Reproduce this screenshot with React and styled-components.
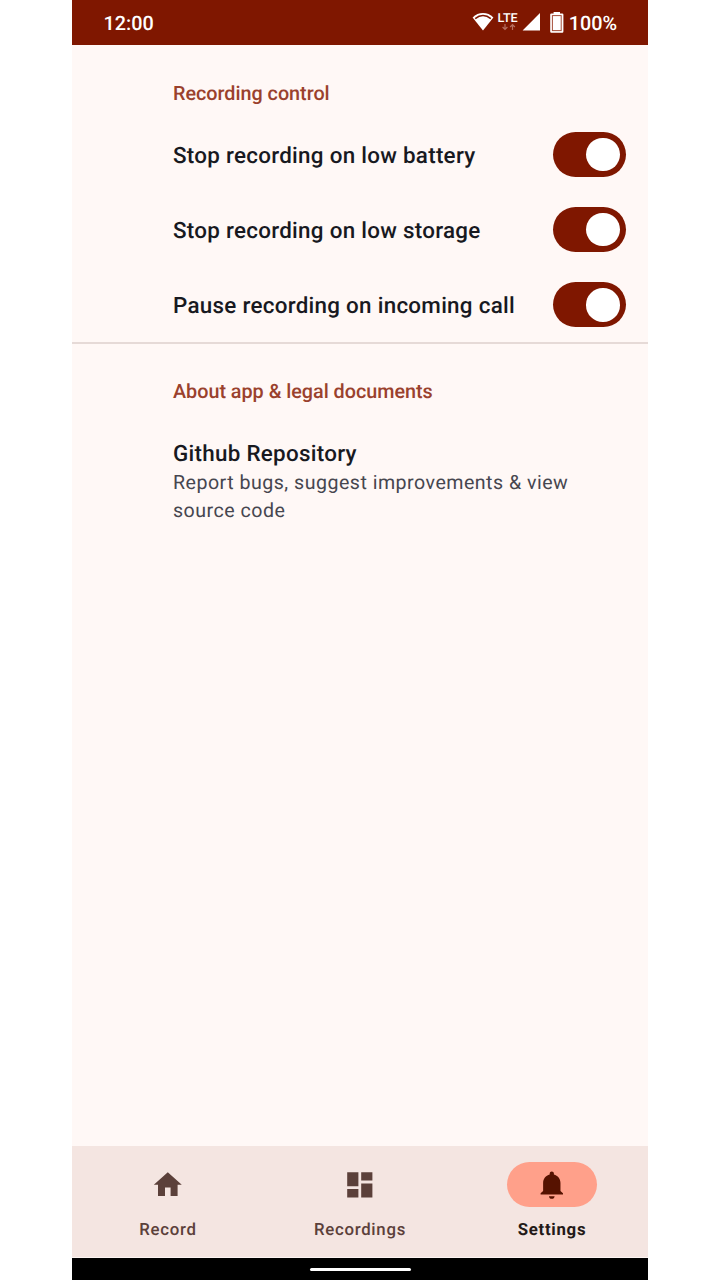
import React from 'react';
import styled, { createGlobalStyle } from 'styled-components';

const GlobalStyle = createGlobalStyle`
  * { box-sizing: border-box; }
  body { margin: 0; background: #ffffff; font-family: Roboto, "Liberation Sans", sans-serif; text-rendering: geometricPrecision; }
`;

const Phone = styled.div`
  width: 576px;
  height: 1280px;
  margin: 0 auto;
  display: flex;
  flex-direction: column;
  background: #fff8f6;
`;

const StatusBar = styled.header`
  height: 44.6px;
  flex: none;
  display: flex;
  align-items: center;
  padding: 3px 31px 0 31.5px;
  background: #7f1700;
  color: #ffffff;
  font-size: 19.8px;
  font-weight: 500;
  line-height: 25px;
`;

const StatusIcons = styled.div`
  margin-left: auto;
  display: flex;
  align-items: center;
`;

const StatusGlyphs = styled.svg`
  display: block;
  width: 96px;
  height: 24px;
  margin-top: -3px;
`;

const BatteryLevel = styled.span`
  width: 49px;
  text-align: right;
`;

const Content = styled.main`
  flex: 1;
  display: flex;
  flex-direction: column;
`;

const SectionTitle = styled.h2`
  margin: ${(p) => p.$top}px 0 0;
  padding-left: 101px;
  color: #9a412d;
  font-size: 19.75px;
  font-weight: 500;
  line-height: 28px;
  letter-spacing: 0;
`;

const ControlList = styled.div`
  padding-top: 9.2px;
`;

const Row = styled.div`
  height: 75.2px;
  display: flex;
  align-items: center;
  justify-content: space-between;
  padding: 0 22.4px 0 101px;
`;

const ItemTitle = styled.div`
  padding-top: ${(p) => p.$shift || 0}px;
  color: #18191f;
  font-size: 22.4px;
  font-weight: 500;
  line-height: 30px;
  letter-spacing: 0.28px;
`;

const Switch = styled.div`
  width: 72.8px;
  height: 44.8px;
  flex: none;
  display: flex;
  align-items: center;
  justify-content: flex-end;
  padding-right: 5.6px;
  border-radius: 23px;
  background: #7f1700;
`;

const Thumb = styled.div`
  width: 33.6px;
  height: 33.6px;
  border-radius: 50%;
  background: #ffffff;
`;

const Divider = styled.div`
  height: 2px;
  flex: none;
  background: #e6dad7;
`;

const LinkItem = styled.div`
  margin-top: 33px;
  padding: 0 60px 0 101px;
`;

const ItemSummary = styled.div`
  color: #46464f;
  font-size: 19.6px;
  line-height: 28px;
  letter-spacing: 0.49px;
`;

const NavBar = styled.nav`
  height: 112px;
  flex: none;
  display: grid;
  grid-template-columns: repeat(3, 1fr);
  background: #f4e5e1;
  border-bottom: 1px solid #fdf5f2;
`;

const NavItem = styled.div`
  display: flex;
  flex-direction: column;
  align-items: center;
  padding-top: 16.6px;
  color: ${(p) => (p.$active ? '#231917' : '#5b403a')};
  font-size: 16.8px;
  font-weight: ${(p) => (p.$active ? 700 : 500)};
  line-height: 22px;
  letter-spacing: 0.72px;
`;

const NavPill = styled.div`
  width: 89.6px;
  height: 44.8px;
  margin-bottom: 12px;
  display: flex;
  align-items: center;
  justify-content: center;
  border-radius: 23px;
  background: ${(p) => (p.$active ? '#ffa08a' : 'transparent')};
  color: ${(p) => (p.$active ? '#561200' : '#5b403a')};
`;

const NavIcon = styled.svg`
  width: 33.6px;
  height: 33.6px;
  fill: currentColor;
`;

const GestureBar = styled.footer`
  height: 22.4px;
  flex: none;
  display: flex;
  justify-content: center;
  align-items: center;
  padding-top: 1px;
  background: #000000;
`;

const GestureHandle = styled.div`
  width: 101px;
  height: 3px;
  border-radius: 2px;
  background: #ffffff;
`;

const controls = [
  'Stop recording on low battery',
  'Stop recording on low storage',
  'Pause recording on incoming call',
];

const tabs = [
  { label: 'Record', path: 'M10 20v-6h4v6h5v-8h3L12 3 2 12h3v8z' },
  { label: 'Recordings', path: 'M3 13h8V3H3v10zm0 8h8v-6H3v6zm10 0h8V11h-8v10zm0-18v6h8V3h-8z' },
  {
    label: 'Settings',
    active: true,
    path: 'M12 22c1.1 0 2-.8 2-1.9h-4c0 1.1.89 1.9 2 1.9zm6.2-5.6v-5.6c0-3.2-1.9-5.5-4.7-6.2V4c0-.83-.67-1.5-1.5-1.5s-1.5.67-1.5 1.5v.6C7.7 5.3 5.8 7.6 5.8 10.8v5.6L4 18v1h16v-1z',
  },
];

function StatusSymbols() {
  return (
    <StatusGlyphs viewBox="472 10 96 24">
      <path d="M472.6 17.4C478.4 11.6 487.6 11.6 493.4 17.4L483 30.6z" fill="#fff" />
      <path d="M475.2 18.6C480 14.6 486 14.6 490.8 18.6" fill="none" stroke="#7f1700" strokeWidth="1.5" />
      <text x="497.6" y="22.4" fill="#fff" fontSize="12.2" fontWeight="500" textLength="20.2" lengthAdjust="spacingAndGlyphs">LTE</text>
      <path d="M505 24v5M502.6 27l2.4 2.4 2.4-2.4M512.5 30v-5M510.1 27l2.4-2.4 2.4 2.4" fill="none" stroke="#b66f60" strokeWidth="1.2" />
      <path d="M540 13v17.4h-17.4z" fill="#fff" />
      <path d="M553.6 12h6.4v1.4h2.2q1.2 0 1.2 1.2v17q0 1.2-1.2 1.2h-10.8q-1.2 0-1.2-1.2v-17q0-1.2 1.2-1.2h2.2z" fill="#fff" />
      <rect x="552.4" y="15.6" width="8.8" height="15" fill="none" stroke="#a64f3b" strokeWidth="1" />
    </StatusGlyphs>
  );
}

export default function App() {
  return (
    <>
      <GlobalStyle />
      <Phone>
        <StatusBar>
          <span>12:00</span>
          <StatusIcons>
            <StatusSymbols />
            <BatteryLevel>100%</BatteryLevel>
          </StatusIcons>
        </StatusBar>
        <Content>
          <SectionTitle $top={35}>Recording control</SectionTitle>
          <ControlList>
            {controls.map((label) => (
              <Row key={label}>
                <ItemTitle $shift={3}>{label}</ItemTitle>
                <Switch><Thumb /></Switch>
              </Row>
            ))}
          </ControlList>
          <Divider />
          <SectionTitle $top={34}>About app &amp; legal documents</SectionTitle>
          <LinkItem>
            <ItemTitle>Github Repository</ItemTitle>
            <ItemSummary>Report bugs, suggest improvements &amp; view source code</ItemSummary>
          </LinkItem>
        </Content>
        <NavBar>
          {tabs.map((tab) => (
            <NavItem key={tab.label} $active={tab.active}>
              <NavPill $active={tab.active}>
                <NavIcon viewBox="0 0 24 24"><path d={tab.path} /></NavIcon>
              </NavPill>
              {tab.label}
            </NavItem>
          ))}
        </NavBar>
        <GestureBar><GestureHandle /></GestureBar>
      </Phone>
    </>
  );
}
